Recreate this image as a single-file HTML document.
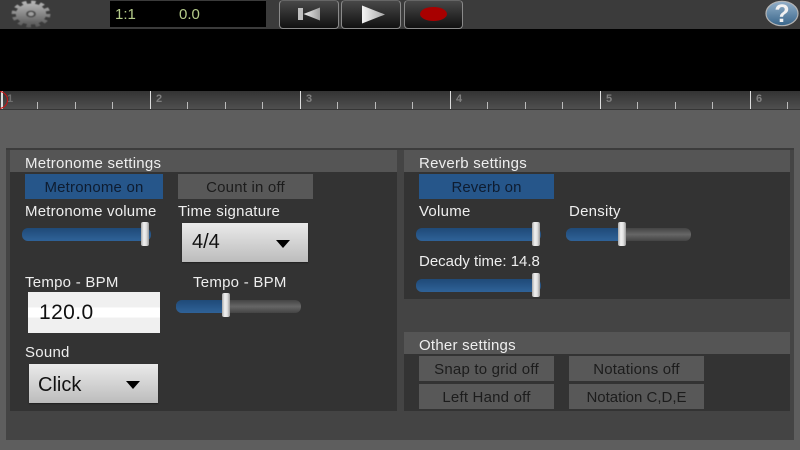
<!DOCTYPE html>
<html><head><meta charset="utf-8"><style>
html,body{margin:0;padding:0;background:#5e5e5e}
#r{position:relative;width:800px;height:450px;overflow:hidden;background:#5e5e5e;font-family:"Liberation Sans",sans-serif}
#r div{position:absolute;box-sizing:border-box}
.t{color:#eee;font-size:15px;letter-spacing:.25px;white-space:nowrap;line-height:16px}
.b{background:#585858;color:#1c1c1c;font-size:15px;letter-spacing:.2px;text-align:center;line-height:27px;height:25px;width:135px;white-space:nowrap}
.on{background:#26568a;color:#0e1c30}
.tr{height:13px;border-radius:6px;background:linear-gradient(#444,#666 50%,#444)}
.fl{height:13px;border-radius:6px 0 0 6px;background:linear-gradient(#1f4a78,#2f6298)}
.th{width:8px;height:24px;border-radius:2px;background:linear-gradient(90deg,#aaa,#f0f0f0 35%,#e2e2e2 65%,#999)}
.sp{background:linear-gradient(#eaeaea,#bcbcbc);box-shadow:0 1px 1px #222;color:#111;font-size:20px;letter-spacing:0}
.ar{width:0;height:0;border-left:7.500px solid transparent;border-right:7.500px solid transparent;border-top:8px solid #000}
.tb{top:0;height:28.500px;border:1px solid #8a8a8a;border-top-color:#666;border-radius:4px;background:linear-gradient(#484848,#111)}
.rl{top:91px;width:1px;height:18px;background:#ddd}
.rs{top:102px;width:1px;height:7px;background:#bbb}
.rn{top:93px;color:#808080;font-size:11px;font-weight:bold;line-height:13px}
</style></head><body><div id="r">
<div style="left:0;top:0;width:800px;height:29px;background:#3b3b3b"></div>
<div style="left:0;top:29px;width:800px;height:62px;background:#000"></div>
<div style="left:0;top:91px;width:800px;height:18px;background:linear-gradient(#333,#4f4f4f)"></div>
<div style="left:0;top:109px;width:800px;height:1px;background:#363636"></div>

<svg style="position:absolute;left:0;top:0" width="800" height="110">
<defs>
<linearGradient id="g" x1="0" y1="0" x2="0" y2="1"><stop offset="0" stop-color="#b4b4b4"/><stop offset="1" stop-color="#5c5c5c"/></linearGradient>
<linearGradient id="h" x1="0" y1="0" x2="0" y2="1"><stop offset="0" stop-color="#93b0c9"/><stop offset="1" stop-color="#38658a"/></linearGradient>
<linearGradient id="w" x1="0" y1="0" x2="1" y2="0"><stop offset="0" stop-color="#f0f0f0"/><stop offset="1" stop-color="#a0a0a0"/></linearGradient>
<linearGradient id="w2" x1="0" y1="0" x2="1" y2="0"><stop offset="0" stop-color="#f4f4f4"/><stop offset="1" stop-color="#a8a8a8"/></linearGradient>
<filter id="bl" x="-20%" y="-20%" width="140%" height="140%"><feGaussianBlur stdDeviation="0.4"/></filter>
</defs>
<g transform="translate(31,14) scale(1.45,1)" filter="url(#bl)">
<circle r="10.500" fill="url(#g)"/>
<circle r="11.500" fill="none" stroke="url(#g)" stroke-width="3.800" stroke-dasharray="3.000 3.020"/>
<circle r="2.700" fill="#a0a0a0" stroke="#4a4a4a" stroke-width="1.500"/>
</g>
<ellipse cx="782" cy="13.500" rx="16" ry="12.200" fill="url(#h)" stroke="#b4b4b4" stroke-width="1.200"/>
<text x="782" y="22" text-anchor="middle" font-family="Liberation Sans" font-weight="bold" font-size="25" fill="#f2f2f2">?</text>
</svg>

<div style="left:110px;top:1px;width:156px;height:26px;background:#000"></div>
<div style="left:115px;top:7px;color:#b5cc8a;font-size:15px;line-height:16px">1:1</div>
<div style="left:179px;top:7px;color:#b5cc8a;font-size:15px;line-height:16px">0.0</div>

<div class="tb" style="left:279px;width:60px"></div>
<div class="tb" style="left:341px;width:60px"></div>
<div class="tb" style="left:404px;width:59px"></div>
<svg style="position:absolute;left:279px;top:0" width="190" height="29">
<rect x="19" y="8" width="5" height="12" fill="#c0c0c0"/>
<path d="M41 7.500V20.500L24.500 14Z" fill="url(#w)"/>
<path d="M83 5.500V23.500L106 14.500Z" fill="url(#w2)"/>
<ellipse cx="154.500" cy="14" rx="13.500" ry="7" fill="#a80000"/>
</svg>

<div class="rl" style="left:1px;width:2px"></div>
<div class="rl" style="left:150px"></div><div class="rl" style="left:300px"></div><div class="rl" style="left:450px"></div><div class="rl" style="left:600px"></div><div class="rl" style="left:750px"></div>
<div class="rs" style="left:37px"></div><div class="rs" style="left:75px"></div><div class="rs" style="left:112px"></div>
<div class="rs" style="left:187px"></div><div class="rs" style="left:225px"></div><div class="rs" style="left:262px"></div>
<div class="rs" style="left:337px"></div><div class="rs" style="left:375px"></div><div class="rs" style="left:412px"></div>
<div class="rs" style="left:487px"></div><div class="rs" style="left:525px"></div><div class="rs" style="left:562px"></div>
<div class="rs" style="left:637px"></div><div class="rs" style="left:675px"></div><div class="rs" style="left:712px"></div>
<div class="rs" style="left:787px"></div>
<div class="rn" style="left:7px;color:#707070">1</div><div class="rn" style="left:156px">2</div><div class="rn" style="left:306px">3</div><div class="rn" style="left:456px">4</div><div class="rn" style="left:606px">5</div><div class="rn" style="left:756px">6</div>
<div style="left:-10px;top:91px;width:18px;height:18px;border:1.500px solid #d01010;border-radius:50%"></div>

<div style="left:6px;top:148px;width:788px;height:292px;background:#444;border-top:2px solid #3c3c3c"></div>

<div style="left:10px;top:150px;width:387px;height:261px;background:#333"></div>
<div style="left:10px;top:150px;width:387px;height:22px;background:#555"></div>
<div style="left:404px;top:150px;width:386px;height:149px;background:#333"></div>
<div style="left:404px;top:150px;width:386px;height:22px;background:#555"></div>
<div style="left:404px;top:332px;width:386px;height:79px;background:#333"></div>
<div style="left:404px;top:332px;width:386px;height:22px;background:#555"></div>

<div class="t" style="left:25px;top:156px">Metronome settings</div>
<div class="b on" style="left:25px;top:174px;width:138px">Metronome on</div>
<div class="b" style="left:178px;top:174px">Count in off</div>
<div class="t" style="left:25px;top:204px;letter-spacing:.2px">Metronome volume</div>
<div class="t" style="left:178px;top:204px">Time signature</div>

<div class="fl" style="left:22px;top:228px;width:129px;border-radius:6px"></div>
<div class="th" style="left:141px;top:222px"></div>

<div class="sp" style="left:182px;top:223px;width:126px;height:39px;line-height:38px;padding-left:10px">4/4</div>
<div class="ar" style="left:276px;top:240px"></div>

<div class="t" style="left:25px;top:275px">Tempo - BPM</div>
<div class="t" style="left:193px;top:275px">Tempo - BPM</div>

<div style="left:28px;top:292px;width:132px;height:41px;background:linear-gradient(#f0f0f0 0,#f0f0f0 38%,#fff 38%,#fff 62%,#f0f0f0 62%);color:#111;font-size:21px;letter-spacing:.4px;line-height:41px;padding-left:11px">120.0</div>

<div class="tr" style="left:176px;top:300px;width:125px"></div>
<div class="fl" style="left:176px;top:300px;width:48px"></div>
<div class="th" style="left:222px;top:293px"></div>

<div class="t" style="left:25px;top:345px">Sound</div>
<div class="sp" style="left:29px;top:364px;width:129px;height:39px;line-height:43px;padding-left:9px">Click</div>
<div class="ar" style="left:126px;top:381px"></div>

<div class="t" style="left:419px;top:156px">Reverb settings</div>
<div class="b on" style="left:419px;top:174px;letter-spacing:.1px">Reverb on</div>
<div class="t" style="left:419px;top:204px">Volume</div>
<div class="t" style="left:569px;top:204px">Density</div>
<div class="fl" style="left:416px;top:228px;width:125px;border-radius:6px"></div>
<div class="th" style="left:532px;top:222px"></div>
<div class="tr" style="left:566px;top:228px;width:125px"></div>
<div class="fl" style="left:566px;top:228px;width:56px"></div>
<div class="th" style="left:618px;top:222px"></div>
<div class="t" style="left:419px;top:254px;letter-spacing:0">Decady time: 14.8</div>
<div class="fl" style="left:416px;top:279px;width:125px;border-radius:6px"></div>
<div class="th" style="left:532px;top:273px"></div>

<div class="t" style="left:419px;top:338px">Other settings</div>
<div class="b" style="left:419px;top:356px">Snap to grid off</div>
<div class="b" style="left:569px;top:356px">Notations off</div>
<div class="b" style="left:419px;top:384px">Left Hand off</div>
<div class="b" style="left:569px;top:384px;letter-spacing:0">Notation C,D,E</div>
</div></body></html>
